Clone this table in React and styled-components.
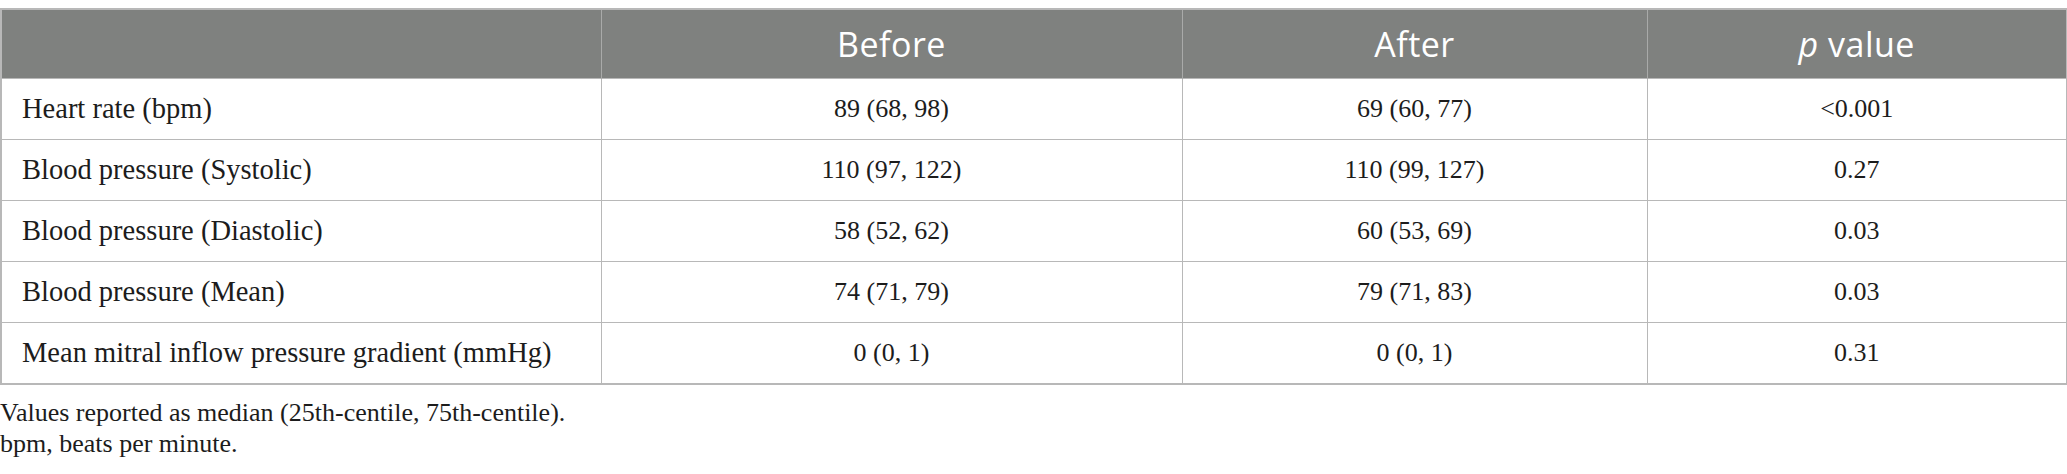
import styled, { createGlobalStyle } from 'styled-components';

const rows = [
  { label: 'Heart rate (bpm)', before: '89 (68, 98)', after: '69 (60, 77)', p: '<0.001' },
  { label: 'Blood pressure (Systolic)', before: '110 (97, 122)', after: '110 (99, 127)', p: '0.27' },
  { label: 'Blood pressure (Diastolic)', before: '58 (52, 62)', after: '60 (53, 69)', p: '0.03' },
  { label: 'Blood pressure (Mean)', before: '74 (71, 79)', after: '79 (71, 83)', p: '0.03' },
  { label: 'Mean mitral inflow pressure gradient (mmHg)', before: '0 (0, 1)', after: '0 (0, 1)', p: '0.31' },
];

const App = () => (
  <Wrapper>
    <GlobalStyle />
    <Table>
      <colgroup>
        <col style={{ width: 600 }} />
        <col style={{ width: 581 }} />
        <col style={{ width: 465 }} />
        <col style={{ width: 420 }} />
      </colgroup>
      <thead>
        <tr>
          <HeadCell />
          <HeadCell>Before</HeadCell>
          <HeadCell>After</HeadCell>
          <HeadCell><em>p</em> value</HeadCell>
        </tr>
      </thead>
      <tbody>
        {rows.map((r) => (
          <tr key={r.label}>
            <Cell $label>{r.label}</Cell>
            <Cell>{r.before}</Cell>
            <Cell>{r.after}</Cell>
            <Cell>{r.p}</Cell>
          </tr>
        ))}
      </tbody>
    </Table>
    <Notes>
      <Note>Values reported as median (25th-centile, 75th-centile).</Note>
      <Note>bpm, beats per minute.</Note>
    </Notes>
  </Wrapper>
);

const GlobalStyle = createGlobalStyle`
  body {
    margin: 0;
    background: #ffffff;
  }
`;

const Wrapper = styled.div`
  padding-top: 8px;
  width: 2067px;
`;

const Table = styled.table`
  width: 2066px;
  table-layout: fixed;
  border-collapse: collapse;
  border: 2px solid #b8b8b8;
`;

const HeadCell = styled.th`
  height: 68px;
  padding: 0;
  background: #7f817f;
  color: #ffffff;
  font-family: "Open Sans", "Noto Sans", sans-serif;
  font-size: 34px;
  font-weight: 400;
  letter-spacing: 0.5px;
  text-align: center;
  vertical-align: middle;
  border-left: 1px solid #a9aaa9;

  &:first-child {
    border-left: none;
  }

  em {
    font-style: italic;
  }
`;

const Cell = styled.td`
  height: 60px;
  padding: 0 0 0 ${({ $label }) => ($label ? '20px' : '0')};
  font-family: "Liberation Serif", "Times New Roman", serif;
  font-size: ${({ $label }) => ($label ? '28.5px' : '26px')};
  color: #1c1c1c;
  text-align: ${({ $label }) => ($label ? 'left' : 'center')};
  vertical-align: middle;
  border: 1px solid #b8b8b8;
`;

const Notes = styled.div`
  padding-top: 12px;
  display: flex;
  flex-direction: column;
`;

const Note = styled.p`
  margin: 0;
  font-family: "Liberation Serif", "Times New Roman", serif;
  font-size: 26px;
  line-height: 31px;
  color: #1c1c1c;
`;

export default App;
